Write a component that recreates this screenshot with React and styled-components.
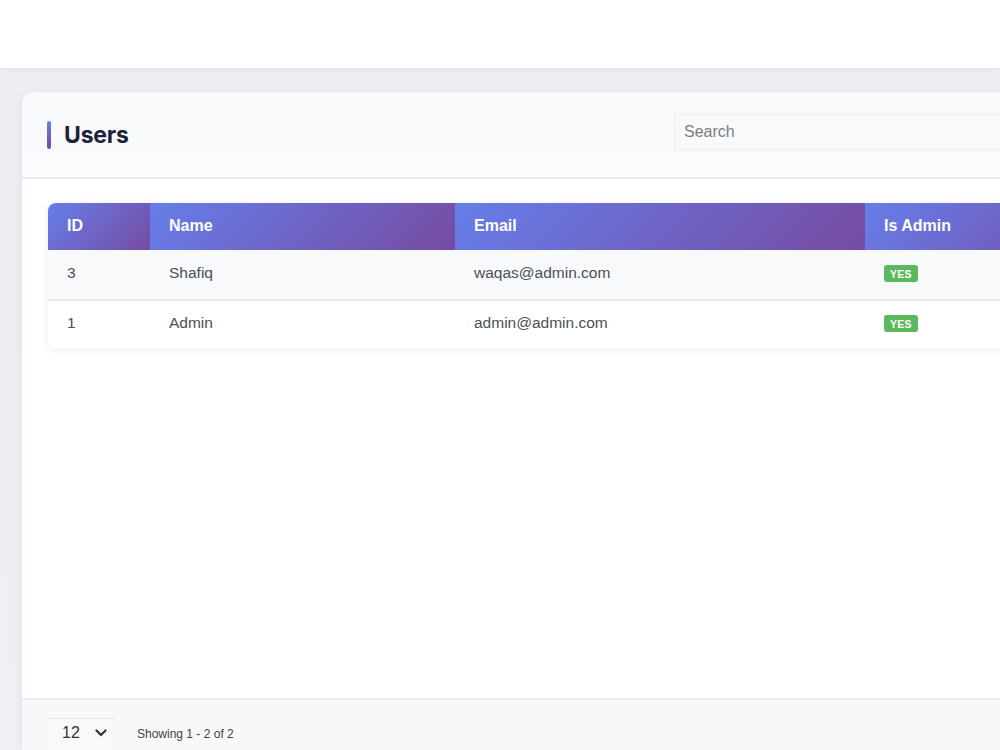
import React from "react";
import styled, { createGlobalStyle } from "styled-components";

const GlobalStyle = createGlobalStyle`
  html, body {
    margin: 0;
    padding: 0;
    overflow: hidden;
    background: #ffffff;
    font-family: "Liberation Sans", Arial, sans-serif;
  }
`

const Page = styled.div`
  width: 1000px;
  height: 750px;
  display: flex;
  flex-direction: column;
  overflow: hidden;
`

const TopBar = styled.div`
  height: 68px;
  flex: none;
  background: #ffffff;
  box-shadow: 0 1px 6px rgba(30, 40, 80, 0.06);
  position: relative;
  z-index: 1;
`

const Main = styled.div`
  flex: 1;
  background: linear-gradient(180deg, #eceef3 0%, #eef0f5 100%);
  padding: 24px 0 0 22px;
  display: flex;
  min-height: 0;
`

const Card = styled.div`
  width: 1120px;
  flex: none;
  background: #ffffff;
  border-radius: 12px 12px 0 0;
  box-shadow: 0 2px 12px rgba(30, 40, 80, 0.06);
  display: flex;
  flex-direction: column;
`

const CardHeader = styled.div`
  height: 85px;
  flex: none;
  display: flex;
  align-items: center;
  justify-content: space-between;
  padding: 0 0 0 25px;
  background: linear-gradient(180deg, #f8f9fa 0%, #fafbfc 100%);
  border-bottom: 2px solid #e6e9ef;
  border-radius: 12px 12px 0 0;
`

const Title = styled.h1`
  margin: 0;
  display: flex;
  align-items: center;
  gap: 13px;
  font-family: Inter, "Liberation Sans", sans-serif;
  font-size: 23px;
  font-weight: 700;
  color: #1c2238;
  letter-spacing: -0.2px;
`

const Accent = styled.span`
  width: 4px;
  height: 28px;
  border-radius: 2px;
  background: linear-gradient(180deg, #667eea 0%, #764ba2 100%);
`

const SearchInput = styled.input`
  width: 420px;
  height: 38px;
  box-sizing: border-box;
  margin: 0 48px 6px 0;
  border: 1px solid #eceef2;
  background: #f8f9fa;
  padding: 0 9px;
  font-family: "Liberation Sans", Arial, sans-serif;
  font-size: 16px;
  color: #333;
  outline: none;
  &::placeholder { color: #7d7d7d; }
`

const CardBody = styled.div`
  flex: 1;
  padding: 24px 0 0 26px;
  min-height: 0;
`

const Table = styled.table`
  width: 1080px;
  border-collapse: separate;
  border-spacing: 0;
  border-radius: 8px;
  overflow: hidden;
  box-shadow: 0 2px 8px rgba(30, 40, 80, 0.08);
`

const Th = styled.th`
  width: ${props => props.w}px;
  height: 47px;
  box-sizing: border-box;
  padding: 0 18px 2px 19px;
  text-align: left;
  font-size: 16px;
  font-weight: 700;
  color: #ffffff;
  background: linear-gradient(135deg, #667eea 0%, #764ba2 100%);
`

const Row = styled.tr`
  background: ${props => props.striped ? '#f8f9fb' : '#ffffff'};
`

const Td = styled.td`
  height: 49px;
  box-sizing: border-box;
  padding: 0 18px 4px 19px;
  font-size: 15.5px;
  color: #4a4f58;
  border-top: ${props => props.divided ? '2px solid #e8ebf2' : 'none'};
`

const Badge = styled.span`
  display: inline-block;
  padding: 3px 6px 2px;
  border-radius: 3px;
  background: #5cb85c;
  color: #ffffff;
  font-size: 10.5px;
  font-weight: 700;
  letter-spacing: 0.2px;
  line-height: 12px;
`

const Footer = styled.div`
  height: 50px;
  flex: none;
  background: #f7f8fa;
  border-top: 2px solid #e8ebf0;
  display: flex;
  align-items: flex-end;
  gap: 22px;
  padding-left: 26px;
`

const PageSize = styled.div`
  width: 67px;
  height: 32px;
  box-sizing: border-box;
  background: #f9f9f9;
  border-top: 1px solid #e3e3e3;
  display: flex;
  align-items: center;
  justify-content: space-between;
  padding: 0 8px 4px 14px;
  font-size: 16px;
  color: #333;
`

const Info = styled.span`
  font-size: 12px;
  color: #444;
  padding-bottom: 9px;
`

const users = [
  { id: 3, name: 'Shafiq', email: 'waqas@admin.com', admin: true },
  { id: 1, name: 'Admin', email: 'admin@admin.com', admin: true },
]

const App = () => {
  return (
    <Page>
      <GlobalStyle />
      <TopBar />
      <Main>
        <Card>
          <CardHeader>
            <Title><Accent />Users</Title>
            <SearchInput placeholder="Search" />
          </CardHeader>
          <CardBody>
            <Table>
              <thead>
                <tr>
                  <Th w={102}>ID</Th>
                  <Th w={305}>Name</Th>
                  <Th w={410}>Email</Th>
                  <Th w={263}>Is Admin</Th>
                </tr>
              </thead>
              <tbody>
                {users.map((u, i) => (
                  <Row key={u.id} striped={i % 2 === 0}>
                    <Td divided={i > 0}>{u.id}</Td>
                    <Td divided={i > 0}>{u.name}</Td>
                    <Td divided={i > 0}>{u.email}</Td>
                    <Td divided={i > 0}>{u.admin ? <Badge>YES</Badge> : null}</Td>
                  </Row>
                ))}
              </tbody>
            </Table>
          </CardBody>
          <Footer>
            <PageSize>
              12
              <svg width="12" height="8" viewBox="0 0 12 8">
                <path d="M1.5 1.5 L6 6 L10.5 1.5" fill="none" stroke="#333" strokeWidth="2.2" strokeLinecap="round" strokeLinejoin="round" />
              </svg>
            </PageSize>
            <Info>Showing 1 - 2 of 2</Info>
          </Footer>
        </Card>
      </Main>
    </Page>
  )
}

export default App;
